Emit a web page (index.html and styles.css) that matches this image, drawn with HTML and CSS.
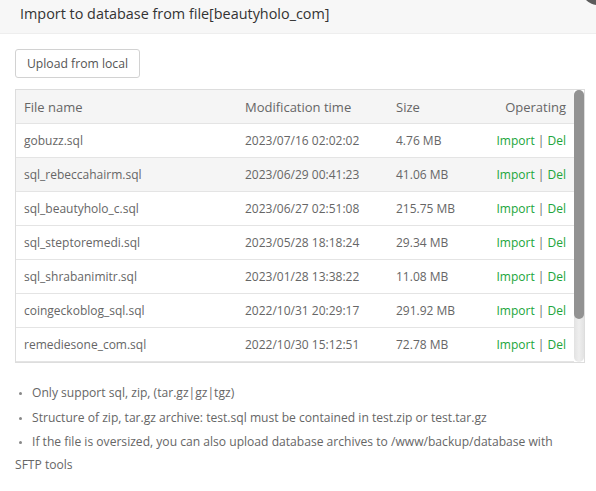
FILE: index.html
```html
<!DOCTYPE html>
<html>
<head>
<meta charset="utf-8">
<link rel="stylesheet" href="styles.css">
</head>
<body>
<div class="dialog">
  <div class="title">Import to database from file[beautyholo_com]</div>
  <span class="close"></span>
  <div class="content">
    <button class="btn">Upload from local</button>
    <div class="table-box">
      <div class="table-view">
        <table class="files">
          <colgroup>
            <col class="c-name"><col class="c-time"><col class="c-size"><col class="c-op">
          </colgroup>
          <thead>
            <tr><th>File name</th><th>Modification time</th><th>Size</th><th class="right">Operating</th></tr>
          </thead>
          <tbody>
            <tr><td>gobuzz.sql</td><td>2023/07/16 02:02:02</td><td>4.76 MB</td><td class="right"><a>Import</a> | <a>Del</a></td></tr>
            <tr class="hover"><td>sql_rebeccahairm.sql</td><td>2023/06/29 00:41:23</td><td>41.06 MB</td><td class="right"><a>Import</a> | <a>Del</a></td></tr>
            <tr><td>sql_beautyholo_c.sql</td><td>2023/06/27 02:51:08</td><td>215.75 MB</td><td class="right"><a>Import</a> | <a>Del</a></td></tr>
            <tr><td>sql_steptoremedi.sql</td><td>2023/05/28 18:18:24</td><td>29.34 MB</td><td class="right"><a>Import</a> | <a>Del</a></td></tr>
            <tr><td>sql_shrabanimitr.sql</td><td>2023/01/28 13:38:22</td><td>11.08 MB</td><td class="right"><a>Import</a> | <a>Del</a></td></tr>
            <tr><td>coingeckoblog_sql.sql</td><td>2022/10/31 20:29:17</td><td>291.92 MB</td><td class="right"><a>Import</a> | <a>Del</a></td></tr>
            <tr><td>remediesone_com.sql</td><td>2022/10/30 15:12:51</td><td>72.78 MB</td><td class="right"><a>Import</a> | <a>Del</a></td></tr>
          </tbody>
        </table>
      </div>
      <div class="scrollbar"><div class="thumb"></div></div>
    </div>
    <ul class="notes">
      <li>Only support sql, zip, (tar.gz|gz|tgz)</li>
      <li>Structure of zip, tar.gz archive: test.sql must be contained in test.zip or test.tar.gz</li>
      <li>If the file is oversized, you can also upload database archives to /www/backup/database with SFTP tools</li>
    </ul>
  </div>
</div>
</body>
</html>
```
FILE: styles.css
```css
html, body {
  margin: 0;
  padding: 0;
  background: #fff;
}
body {
  font-family: "Open Sans", "Noto Sans", sans-serif;
  color: #666;
  font-size: 12px;
  overflow: hidden;
}
.dialog {
  position: relative;
  width: 596px;
  height: 491px;
  overflow: hidden;
}
.title {
  height: 33px;
  line-height: 27px;
  padding-left: 20px;
  background: #f7f7f7;
  border-bottom: 1px solid #eee;
  color: #333;
  font-size: 14.4px;
}
.close {
  position: absolute;
  left: 581px;
  top: -29px;
  width: 34px;
  height: 34px;
  border-radius: 50%;
  background: #5c5c5c;
}
.content {
  padding: 15px 11px 0 15px;
}
.btn {
  display: block;
  height: 29px;
  width: 125px;
  padding: 0;
  border: 1px solid #d2d2d2;
  border-radius: 3px;
  background: #fff;
  color: #555;
  font-family: inherit;
  font-size: 12.2px;
}
.table-box {
  margin-top: 11px;
  height: 272px;
  border: 1px solid #ddd;
  display: flex;
}
.table-view {
  flex: 1;
  overflow: hidden;
}
.scrollbar {
  width: 10px;
  height: 272px;
  border-radius: 5px;
  background: linear-gradient(to right, #e2e2e2, #eeeeee 50%, #e2e2e2);
}
.thumb {
  height: 229px;
  border-radius: 5px;
  background: #929292;
}
.files {
  width: 100%;
  table-layout: fixed;
  border-collapse: collapse;
}
.c-name { width: 221px; }
.c-time { width: 151px; }
.c-size { width: 96px; }
.files th, .files td {
  height: 33px;
  padding: 0 8px;
  border-bottom: 1px solid #e4e4e4;
  text-align: left;
  font-weight: normal;
  white-space: nowrap;
  color: #666;
}
.files th {
  background: #f5f5f5;
  font-size: 13px;
}
.files td {
  font-size: 12px;
}
.files tr.hover td {
  background: #f5f5f5;
}
.files .right {
  text-align: right;
}
.files a {
  color: #20a53a;
}
.notes {
  margin: 18px 10px 0 0;
  padding: 0;
  list-style: none;
  color: #666;
  font-size: 12.1px;
  line-height: 23px;
}
.notes li {
  margin-bottom: 1.5px;
}
.notes li::before {
  content: "";
  display: inline-block;
  width: 3px;
  height: 3px;
  border-radius: 50%;
  background: #888;
  margin: 0 10px 0 4px;
  vertical-align: middle;
}
```
